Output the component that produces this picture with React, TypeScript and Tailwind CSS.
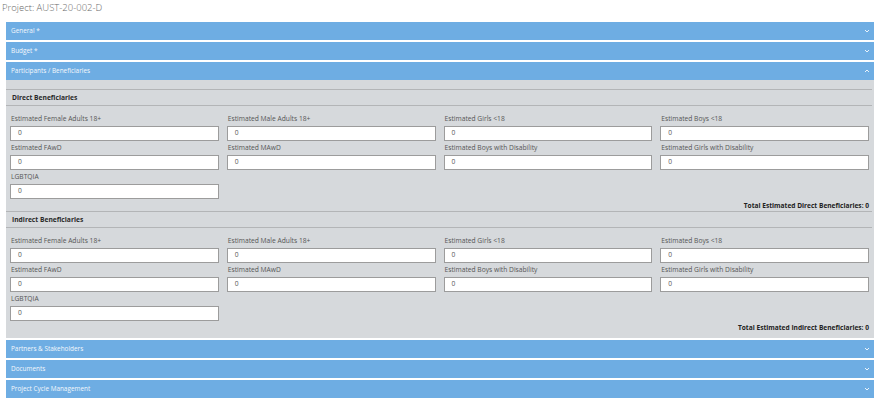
import React from "react";

const fields = [
  "Estimated Female Adults 18+",
  "Estimated Male Adults 18+",
  "Estimated Girls <18",
  "Estimated Boys <18",
  "Estimated FAwD",
  "Estimated MAwD",
  "Estimated Boys with Disability",
  "Estimated Girls with Disability",
  "LGBTQIA",
];

function Chevron({ up = false }: { up?: boolean }) {
  return (
    <svg width="6" height="4" viewBox="0 0 6 4" className="shrink-0">
      <path
        d={up ? "M1 3 L3 1 L5 3" : "M1 1 L3 3 L5 1"}
        fill="none"
        stroke="rgba(255,255,255,0.85)"
        strokeWidth="1"
      />
    </svg>
  );
}

function Bar({ title, up = false, className = "" }: { title: string; up?: boolean; className?: string }) {
  return (
    <div
      className={`h-[18px] bg-[#6eade3] flex items-center justify-between pl-[5px] pr-[4px] text-[6.4px] text-[#f4f8fc] ${className}`}
    >
      <span>{title}</span>
      <Chevron up={up} />
    </div>
  );
}

function Section({ title, total }: { title: string; total: string }) {
  return (
    <div>
      <div className="h-[17px] border-y border-[#b3b5b7] flex items-center pl-[6px] mr-[2px] pt-[1px] text-[6.7px] font-bold text-[#2a2a2a]">
        {title}
      </div>
      <div className="grid grid-cols-4 gap-x-[8px] pl-[4px] pr-[5px] pt-[6px]">
        {fields.map((f) => (
          <div key={f} className="flex flex-col">
            <div className="h-[14px] leading-[14px] text-[6.7px] text-[#555] pl-[1px]">{f}</div>
            <div className="h-[15px] bg-white border border-[#9c9c9c] flex items-center pl-[7px] text-[6.7px] text-[#555]">
              0
            </div>
          </div>
        ))}
      </div>
      <div className="h-[12px] flex items-center justify-end pr-[5px] pt-[1px] text-[6.6px] font-bold text-[#222]">
        {total}
      </div>
    </div>
  );
}

export default function App() {
  return (
    <div
      className="w-[876px] h-[400px] bg-white overflow-hidden"
      style={{ fontFamily: '"Open Sans", "Noto Sans", sans-serif' }}
    >
      <div className="h-[22px] pl-[2px] text-[9.5px] leading-[15px] font-light text-[#6a6a6a]">
        Project: AUST-20-002-D
      </div>
      <div className="ml-[6px] w-[868px] flex flex-col">
        <Bar title="General *" />
        <Bar title="Budget *" className="mt-[2px]" />
        <Bar title="Participants / Beneficiaries" up className="mt-[2px]" />
        <div className="bg-[#d6d9dc] pt-[9px] pb-[5px]">
          <Section title="Direct Beneficiaries" total="Total Estimated Direct Beneficiaries: 0" />
          <Section title="Indirect Beneficiaries" total="Total Estimated Indirect Beneficiaries: 0" />
        </div>
        <Bar title="Partners & Stakeholders" className="mt-[1.5px]" />
        <Bar title="Documents" className="mt-[2px]" />
        <Bar title="Project Cycle Management" className="mt-[2px]" />
      </div>
    </div>
  );
}
